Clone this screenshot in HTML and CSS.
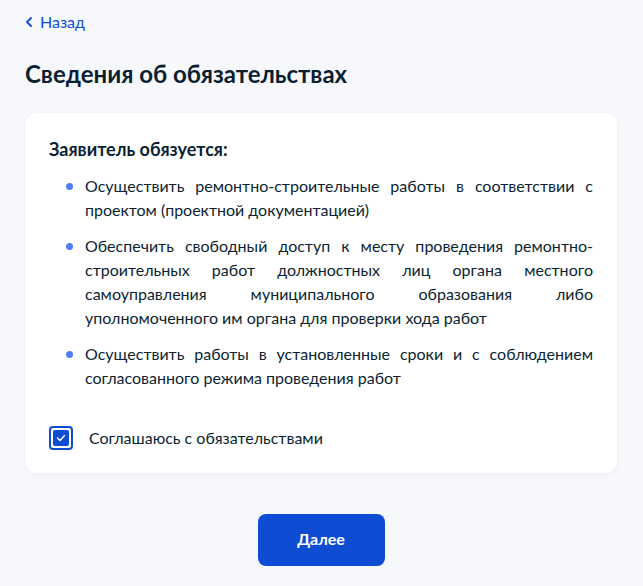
FILE: index.html
```html
<!DOCTYPE html>
<html lang="ru">
<head>
  <meta charset="UTF-8" />
  <title>Сведения об обязательствах</title>
  <link rel="stylesheet" href="styles.css">
</head>
<body>

  <a class="back" href="#">
    <svg class="back-icon" width="8" height="10" viewBox="0 0 8 10"><path d="M6 1L2 5l4 4" fill="none" stroke="#0d4cd3" stroke-width="1.8" stroke-linecap="round" stroke-linejoin="round"/></svg>
    Назад
  </a>

  <h1 class="title">Сведения об обязательствах</h1>

  <!-- Obligations card -->
  <div class="card">
    <h2 class="card-title">Заявитель обязуется:</h2>
    <ul class="list">
      <li>Осуществить ремонтно-строительные работы в соответствии с проектом (проектной документацией)</li>
      <li>Обеспечить свободный доступ к месту проведения ремонтно-строительных работ должностных лиц органа местного самоуправления муниципального образования либо уполномоченного им органа для проверки хода работ</li>
      <li>Осуществить работы в установленные сроки и с соблюдением согласованного режима проведения работ</li>
    </ul>

    <label class="check">
      <span class="check-box">
        <span class="check-mark">
          <svg width="10" height="8" viewBox="0 0 10 8"><path d="M1.5 4l2.5 2.5 4.5-5" fill="none" stroke="#fff" stroke-width="1.4" stroke-linecap="round" stroke-linejoin="round"/></svg>
        </span>
      </span>
      Соглашаюсь с обязательствами
    </label>
  </div>

  <div class="actions">
    <button type="button" class="btn">Далее</button>
  </div>

</body>
</html>
```

FILE: styles.css
```css
body {
  font-family: Lato, "Open Sans", sans-serif;
  color: #0b1f33;
  background: #f6f8fb;
  margin: 0;
  padding: 10px 26px 20px 25px;
}
.back {
  display: inline-flex;
  align-items: center;
  gap: 7px;
  color: #0d4cd3;
  text-decoration: none;
  font-size: 16px;
  line-height: 24px;
}
.title {
  font-size: 24px;
  line-height: 32px;
  font-weight: 700;
  margin: 24px 0 23px;
}
.card {
  background: #fff;
  border-radius: 12px;
  padding: 24px 24px 23px;
  box-shadow: 0 1px 4px rgba(11, 31, 51, 0.05);
}
.card-title {
  font-size: 18px;
  line-height: 24px;
  font-weight: 700;
  margin: 0;
}
.list {
  list-style: none;
  margin: 13px 0 36px;
  padding: 0 0 0 36px;
}
.list li {
  position: relative;
  font-size: 16px;
  line-height: 24px;
  text-align: justify;
  margin-bottom: 12px;
}
.list li:last-child {
  margin-bottom: 0;
}
.list li::before {
  content: "";
  position: absolute;
  left: -19px;
  top: 9px;
  width: 7px;
  height: 7px;
  border-radius: 50%;
  background: #4f7ff0;
}
.check {
  display: flex;
  align-items: center;
  gap: 16px;
  font-size: 16px;
  line-height: 24px;
}
.check-box {
  box-sizing: border-box;
  width: 24px;
  height: 24px;
  border: 2px solid #0d4cd3;
  border-radius: 4px;
  padding: 2px;
}
.check-mark {
  display: flex;
  align-items: center;
  justify-content: center;
  width: 16px;
  height: 16px;
  border-radius: 2px;
  background: #0d4cd3;
}
.actions {
  display: flex;
  justify-content: center;
  margin-top: 41px;
}
.btn {
  width: 127px;
  height: 52px;
  border: none;
  border-radius: 8px;
  background: #0d4cd3;
  color: #fff;
  font-family: Lato, sans-serif;
  font-size: 16px;
  font-weight: 700;
  padding: 0 0 4px;
}
```
